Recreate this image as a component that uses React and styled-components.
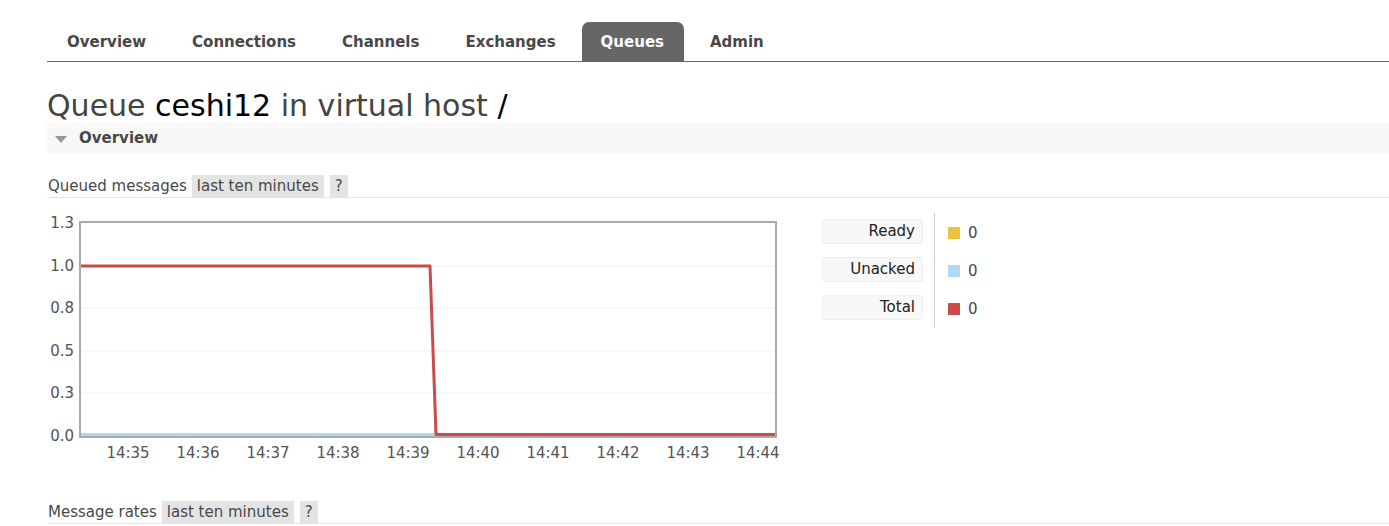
import React from "react";
import styled, { createGlobalStyle } from "styled-components";

const GlobalStyle = createGlobalStyle`
  html, body {
    margin: 0;
    padding: 0;
    background: #fff;
  }
  body {
    font-family: "DejaVu Sans", Verdana, sans-serif;
    color: #484848;
    overflow: hidden;
  }
`;

const Page = styled.div`
  padding: 22px 0 0 47px;
  width: 1342px;
`;

const Nav = styled.ul`
  display: flex;
  list-style: none;
  margin: 0;
  padding: 0;
  gap: 6px;
  border-bottom: 1px solid #666;
`;

const Tab = styled.li`
  height: 39px;
  padding: 0 20px 0 ${(p) => (p.$active ? 19 : 20)}px;
  display: flex;
  align-items: center;
  font-weight: bold;
  font-size: 15px;
  color: ${(p) => (p.$active ? "#fff" : "#484848")};
  background: ${(p) => (p.$active ? "#666" : "transparent")};
  border-radius: 7px 7px 0 0;
`;

const Title = styled.h1`
  margin: 25px 0 0 0;
  padding-top: 2px;
  font-size: 30px;
  font-weight: normal;
  color: #444;
  line-height: 34px;
  height: 34px;
  white-space: nowrap;
  b {
    font-weight: normal;
    color: #000;
  }
`;

const SectionBar = styled.div`
  height: 30px;
  background: #f8f8f8;
  display: flex;
  align-items: center;
  gap: 12px;
  padding-left: 8px;
  font-weight: bold;
  font-size: 15px;
  color: #484848;
`;

const Triangle = styled.span`
  width: 0;
  height: 0;
  border-left: 6px solid transparent;
  border-right: 6px solid transparent;
  border-top: 7px solid #999;
  margin-top: 2px;
`;

const SubHead = styled.div`
  display: flex;
  align-items: center;
  gap: 5px;
  height: 22px;
  margin-top: ${(p) => p.$top}px;
  border-bottom: 1px solid #e4e4e4;
  font-size: 15px;
  color: #484848;
  padding-left: 1px;
  white-space: nowrap;
`;

const Pill = styled.span`
  background: #e4e4e4;
  height: 22px;
  line-height: 22px;
  padding: 0 5px;
  margin-left: ${(p) => p.$gap || 0}px;
`;

const ChartRow = styled.div`
  display: flex;
  margin-top: 15px;
  height: 262px;
`;

const Legend = styled.div`
  display: flex;
  margin-left: 40px;
  height: 115px;
`;

const LegendLabels = styled.div`
  display: flex;
  flex-direction: column;
  gap: 13px;
  padding-top: 6px;
  padding-right: 11px;
  border-right: 1px solid #ccc;
`;

const LegendLabel = styled.div`
  width: 92px;
  height: 23px;
  line-height: 23px;
  text-align: right;
  padding-right: 7px;
  background: #f8f8f8;
  border: 1px solid #efefef;
  border-radius: 3px;
  font-size: 15px;
  color: #222;
`;

const LegendValues = styled.div`
  display: flex;
  flex-direction: column;
  gap: 13px;
  padding-top: 7px;
  padding-left: 13px;
`;

const LegendValue = styled.div`
  height: 25px;
  display: flex;
  align-items: center;
  gap: 8px;
  font-size: 15px;
  color: #484848;
`;

const Swatch = styled.span`
  width: 12px;
  height: 12px;
  background: ${(p) => p.$color};
`;

const yTicks = [
  { label: "1.3", y: 10 },
  { label: "1.0", y: 53 },
  { label: "0.8", y: 95 },
  { label: "0.5", y: 138 },
  { label: "0.3", y: 180 },
  { label: "0.0", y: 223 },
];

const xTicks = ["14:35", "14:36", "14:37", "14:38", "14:39", "14:40", "14:41", "14:42", "14:43", "14:44"];

function Chart() {
  return (
    <svg width="735" height="262" style={{ display: "block", fontFamily: "DejaVu Sans, Verdana, sans-serif" }}>
      {yTicks.slice(1, 5).map((t) => (
        <line key={t.label} x1="34" x2="728" y1={t.y} y2={t.y} stroke="#eee" strokeWidth="1" />
      ))}
      {yTicks.map((t) => (
        <text key={t.label} x="27" y={t.y + 5} textAnchor="end" fontSize="15" fill="#545454">
          {t.label}
        </text>
      ))}
      {xTicks.map((t, i) => (
        <text key={t} x={81 + i * 70} y="245" textAnchor="middle" fontSize="15" fill="#545454">
          {t}
        </text>
      ))}
      <polyline points="34,221.5 389,221.5" fill="none" stroke="#afd8f8" strokeWidth="3" />
      <polyline points="34,53 383,53 389,221.5 728,221.5" fill="none" stroke="#cb4b4b" strokeWidth="3" strokeLinejoin="round" />
      <rect x="33" y="9" width="696" height="215" fill="none" stroke="#aaa" strokeWidth="2" />
    </svg>
  );
}

const legend = [
  { label: "Ready", color: "#edc240" },
  { label: "Unacked", color: "#afd8f8" },
  { label: "Total", color: "#cb4b4b" },
];

export default function App() {
  return (
    <Page>
      <GlobalStyle />
      <Nav>
        {["Overview", "Connections", "Channels", "Exchanges", "Queues", "Admin"].map((t) => (
          <Tab key={t} $active={t === "Queues"}>
            {t}
          </Tab>
        ))}
      </Nav>
      <Title>
        Queue <b>ceshi12</b> in virtual host <b>/</b>
      </Title>
      <SectionBar>
        <Triangle />
        Overview
      </SectionBar>
      <SubHead $top={22}>
        Queued messages <Pill>last ten minutes</Pill>
        <Pill $gap={1}>?</Pill>
      </SubHead>
      <ChartRow>
        <Chart />
        <Legend>
          <LegendLabels>
            {legend.map((l) => (
              <LegendLabel key={l.label}>{l.label}</LegendLabel>
            ))}
          </LegendLabels>
          <LegendValues>
            {legend.map((l) => (
              <LegendValue key={l.label}>
                <Swatch $color={l.color} />0
              </LegendValue>
            ))}
          </LegendValues>
        </Legend>
      </ChartRow>
      <SubHead $top={26}>
        Message rates <Pill>last ten minutes</Pill>
        <Pill $gap={1}>?</Pill>
      </SubHead>
    </Page>
  );
}
